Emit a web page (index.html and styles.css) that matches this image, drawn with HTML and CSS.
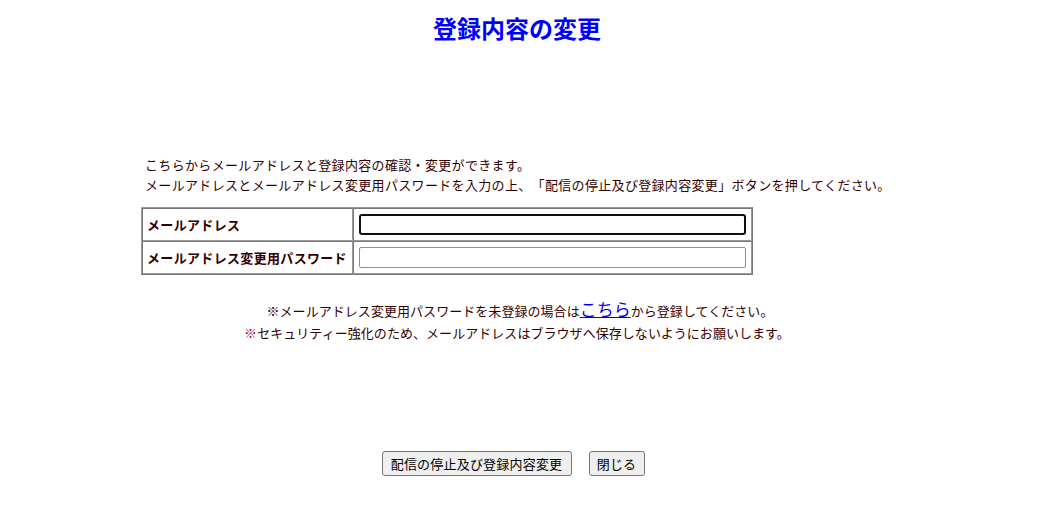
FILE: index.html
```html
<!DOCTYPE html>
<html lang="ja">
<head>
<meta charset="utf-8">
<title>登録内容の変更</title>
<link rel="stylesheet" href="styles.css">
</head>
<body>
<div class="page">
  <h1 class="title">登録内容の変更</h1>
  <div class="intro">
    <p>こちらからメールアドレスと登録内容の確認・変更ができます。</p>
    <p>メールアドレスとメールアドレス変更用パスワードを入力の上、「配信の停止及び登録内容変更」ボタンを押してください。</p>
  </div>
  <table class="form">
    <tr>
      <th>メールアドレス</th>
      <td><input class="field focused" type="text"></td>
    </tr>
    <tr>
      <th>メールアドレス変更用パスワード</th>
      <td><input class="field" type="password"></td>
    </tr>
  </table>
  <div class="notes">
    <p class="note1">※メールアドレス変更用パスワードを未登録の場合は<a href="#" class="link">こちら</a>から登録してください。</p>
    <p class="note2"><span class="mark">※</span>セキュリティー強化のため、メールアドレスはブラウザへ保存しないようにお願いします。</p>
  </div>
  <div class="buttons">
    <button class="btn btn-main" type="button">配信の停止及び登録内容変更</button>
    <button class="btn btn-close" type="button">閉じる</button>
  </div>
</div>
</body>
</html>
```

FILE: styles.css
```css
html, body {
  margin: 0;
  padding: 0;
  background: #ffffff;
}
body {
  font-family: "Noto Sans CJK JP", "Noto Sans", sans-serif;
  font-size: 13px;
  color: #330000;
  text-spacing-trim: space-all;
  letter-spacing: 0.33px;
}
.page {
  width: 1038px;
  padding-top: 12px;
}
.title {
  margin: 0;
  text-align: center;
  font-size: 24px;
  line-height: 32px;
  font-weight: bold;
  color: #0000ff;
  letter-spacing: 0;
  padding-right: 4px;
}
.intro {
  margin: 111px 0 0 145px;
}
.intro p {
  margin: 0;
  line-height: 20px;
}
.form {
  margin: 12px 0 0 141px;
  border-collapse: separate;
  border-spacing: 0;
  border: 1px solid #999999;
  border-right-color: #777777;
  border-bottom-color: #777777;
  width: 612px;
}
.form th,
.form td {
  border: 1px solid #999999;
  border-top-color: #777777;
  border-left-color: #777777;
  height: 31px;
  padding: 0 4px;
}
.form th {
  text-align: left;
  font-weight: bold;
  width: 202px;
  white-space: nowrap;
  color: #330000;
}
.form td {
  padding: 0 5px;
}
.field {
  display: block;
  box-sizing: border-box;
  width: 387px;
  height: 21px;
  margin: 0;
  border: 1px solid #8f8f8f;
  border-radius: 2px;
  padding: 0 2px;
  font: inherit;
  background: #fff;
}
.field.focused {
  border: 2px solid #101010;
  border-radius: 3px;
}
.notes {
  margin-top: 23px;
  text-align: center;
  padding-right: 4px;
  letter-spacing: 0.05px;
}
.notes p {
  margin: 0;
  line-height: 22px;
}
.note1 {
  padding-left: 6px;
}
.link {
  color: #0000ee;
  font-size: 17px;
  text-decoration: underline;
  letter-spacing: 0;
}
.mark {
  color: #cc0066;
}
.buttons {
  margin-top: 107px;
  display: flex;
  justify-content: center;
  gap: 17px;
  padding-right: 12px;
}
.btn {
  box-sizing: border-box;
  height: 25px;
  font-family: "Noto Sans CJK JP", "Noto Sans", sans-serif;
  font-size: 13px;
  letter-spacing: 0.2px;
  color: #000;
  background: #efefef;
  border: 1px solid #767676;
  border-radius: 3px;
  padding: 0 4px;
  line-height: 21px;
}
.btn-main {
  width: 190px;
}
.btn-close {
  width: 56px;
}
```
